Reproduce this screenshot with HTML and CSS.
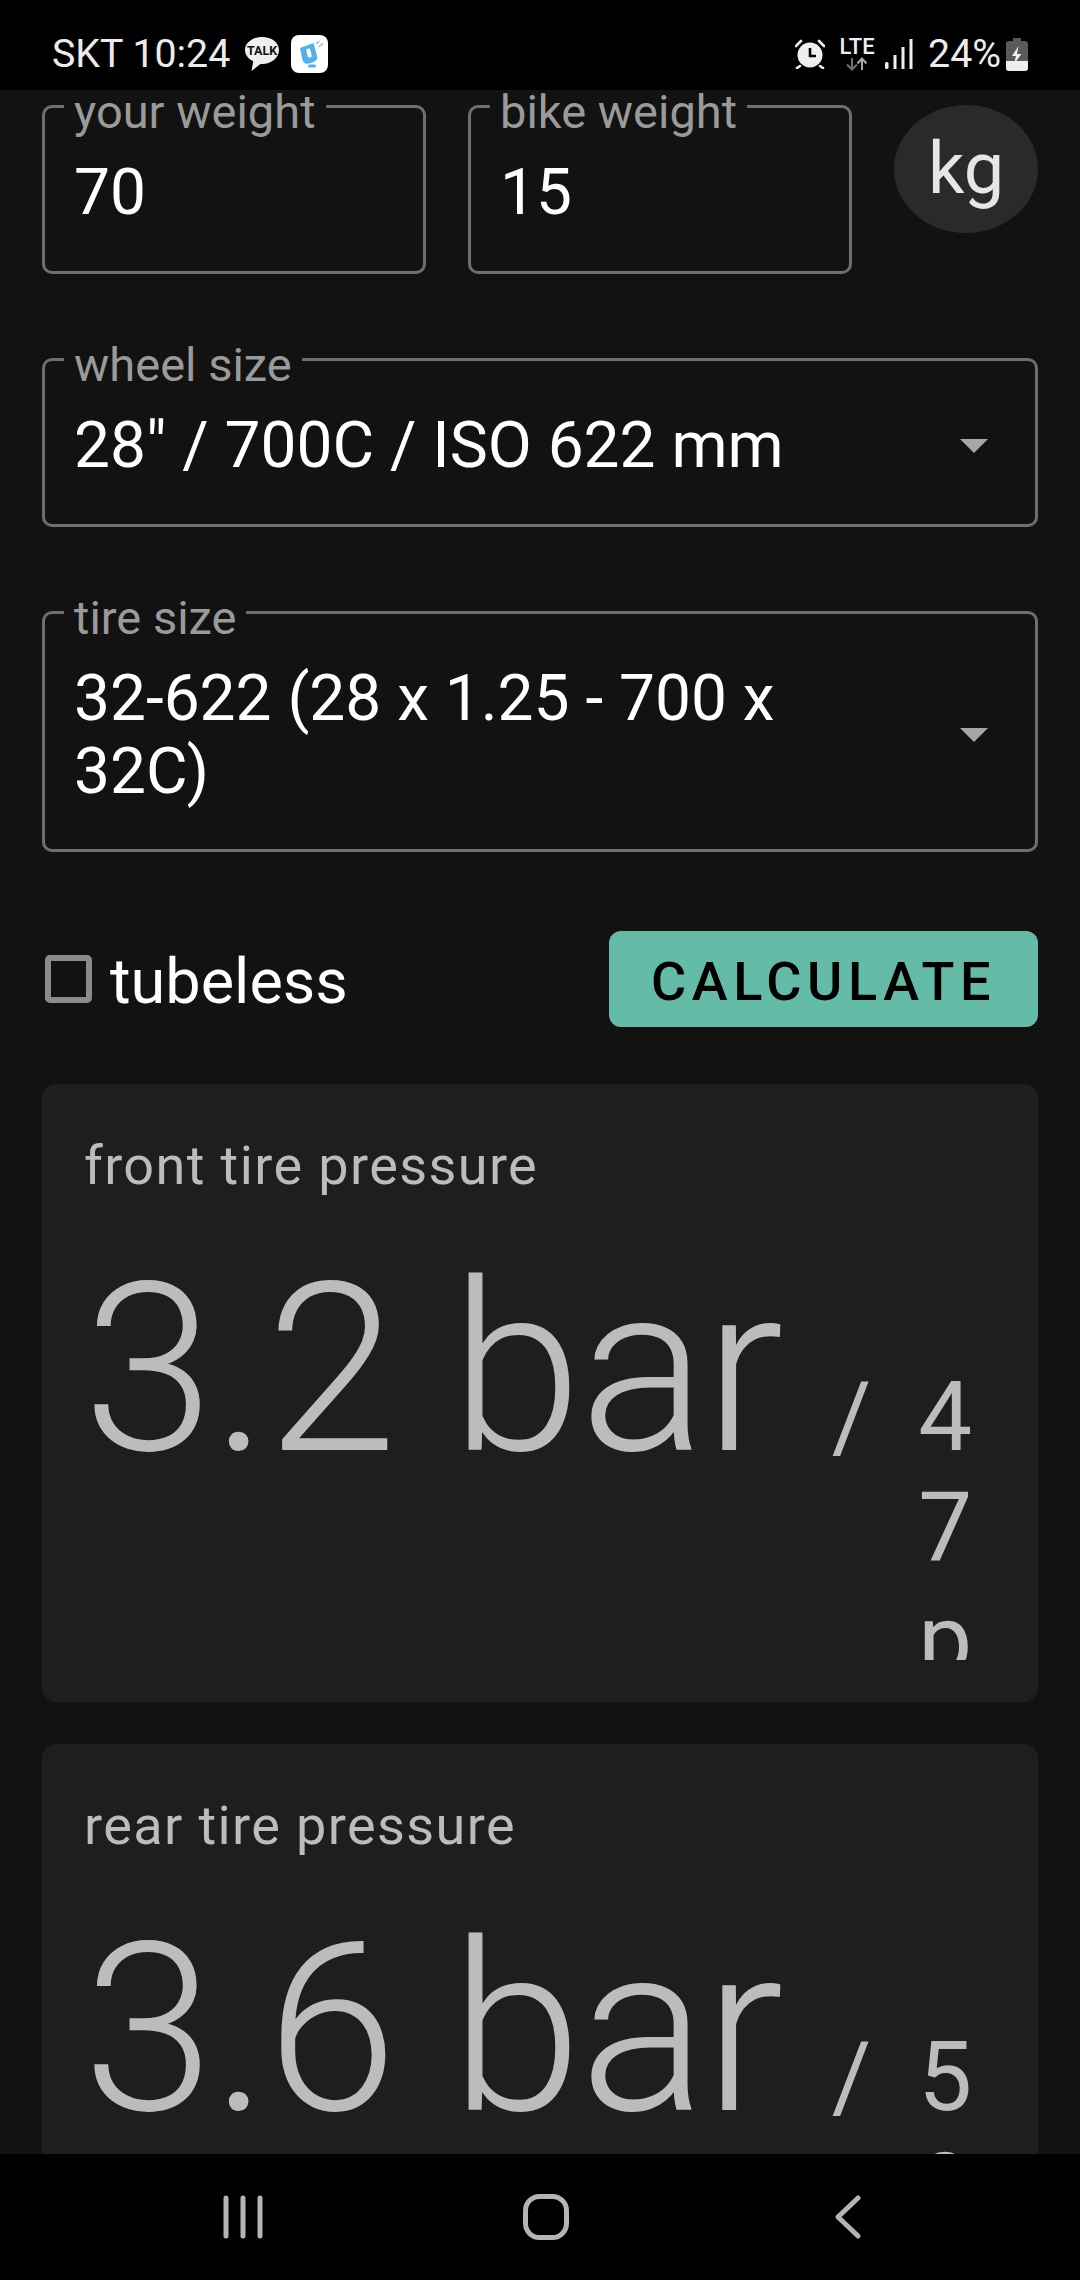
FILE: index.html
```html
<!DOCTYPE html>
<html lang="en">
<head>
<meta charset="utf-8">
<title>Tire pressure</title>
<link rel="stylesheet" href="styles.css">
</head>
<body>
<div class="screen">
  <header class="status">
    <div class="status-left">
      <span class="status-text">SKT 10:24</span>
      <svg class="ic-talk" viewBox="0 0 36 36"><path d="M18 1C8.600 1 1 6.800 1 14c0 4.800 3.300 8.900 8.200 11.200L7.500 35l9-7.100c.5 0 1 .1 1.500.1 9.400 0 17-6.300 17-14S27.400 1 18 1z" fill="#efefef"/><text x="18" y="19" class="talk-text" text-anchor="middle">TALK</text></svg>
      <svg class="ic-d" viewBox="0 0 37 38"><rect width="37" height="38" rx="8" fill="#fff"/><path d="M9 13l13.500-5 3.500 13c.8 3-.5 5-3.500 6l-5 1.500c-3 .8-5-.5-6-3.500z" fill="#4fb0ef"/><rect x="16" y="13.500" width="4" height="9" rx="1.500" transform="rotate(-15 18 18)" fill="#fff"/><rect x="17" y="29.500" width="8" height="3" rx="1.500" fill="#4fb0ef"/><path d="M25 9l3.500-3M27.500 12l4.500-3.500" stroke="#7fbfe8" stroke-width="1.300" fill="none"/></svg>
    </div>
    <div class="status-right">
      <svg class="ic-alarm" viewBox="0 0 30 30"><circle cx="15" cy="16" r="12.500" fill="#efefef"/><path d="M15 9v8h6" stroke="#000" stroke-width="2.600" fill="none"/><path d="M1 7l5-5M29 7l-5-5M5 27l-3 2M25 27l3 2" stroke="#efefef" stroke-width="2.600" stroke-linecap="round"/></svg>
      <div class="lte">
        <span class="lte-text">LTE</span>
        <svg class="ic-arrows" viewBox="0 0 24 14"><path d="M7 1v11M2 7.500L7 12.500 12 7.500" stroke="#6f6f6f" stroke-width="2" fill="none"/><path d="M17 13V2M12.500 6.500L17 1.500 21.500 6.500" stroke="#a8a8a8" stroke-width="2" fill="none"/></svg>
      </div>
      <svg class="ic-signal" viewBox="0 0 28 30"><rect x="0" y="23" width="3.500" height="7" rx="1.500" fill="#efefef"/><rect x="8.500" y="16" width="3" height="14" fill="#efefef"/><rect x="16.500" y="8" width="3" height="22" fill="#efefef"/><rect x="24.500" y="0" width="3" height="30" fill="#efefef"/></svg>
      <span class="status-text">24%</span>
      <svg class="ic-battery" viewBox="0 0 22 33"><path d="M7 0h8v3h4c1.700 0 3 1.300 3 3v24c0 1.700-1.300 3-3 3H3c-1.700 0-3-1.300-3-3V6c0-1.700 1.300-3 3-3h4z" fill="#5a5a5a"/><path d="M0 23h22v7c0 1.700-1.300 3-3 3H3c-1.700 0-3-1.300-3-3z" fill="#efefef"/><path d="M12.500 8L6 18h4l-2 8 7.500-10h-4.500z" fill="#efefef"/></svg>
    </div>
  </header>

  <main class="content">
    <section class="row-top">
      <div class="field">
        <span class="label">your weight</span>
        <div class="value">70</div>
      </div>
      <div class="field">
        <span class="label">bike weight</span>
        <div class="value">15</div>
      </div>
      <button class="unit">kg</button>
    </section>

    <div class="field select">
      <span class="label">wheel size</span>
      <div class="value">28" / 700C / ISO 622 mm</div>
      <span class="caret"></span>
    </div>

    <div class="field select tall">
      <span class="label">tire size</span>
      <div class="value">32-622 (28 x 1.25 - 700 x 32C)</div>
      <span class="caret"></span>
    </div>

    <section class="row-action">
      <label class="check"><span class="box"></span><span class="check-text">tubeless</span></label>
      <button class="calc">CALCULATE</button>
    </section>

    <article class="card">
      <h2 class="card-title">front tire pressure</h2>
      <div class="reading">
        <span class="big">3.2 bar</span>
        <span class="slash">/</span>
        <span class="alt">47 psi</span>
      </div>
    </article>

    <article class="card">
      <h2 class="card-title">rear tire pressure</h2>
      <div class="reading">
        <span class="big">3.6 bar</span>
        <span class="slash">/</span>
        <span class="alt">53 psi</span>
      </div>
    </article>
  </main>

  <nav class="nav">
    <svg class="nav-ic recents" viewBox="0 0 40 44"><path d="M3 3v38M20 3v38M37 3v38" stroke="#b4b4b4" stroke-width="5" stroke-linecap="round" fill="none"/></svg>
    <svg class="nav-ic home" viewBox="0 0 46 46"><rect x="2.500" y="2.500" width="41" height="41" rx="14" stroke="#b4b4b4" stroke-width="5" fill="none"/></svg>
    <svg class="nav-ic back" viewBox="0 0 26 44"><path d="M23 3L3 22l20 19" stroke="#b4b4b4" stroke-width="5" stroke-linecap="round" stroke-linejoin="round" fill="none"/></svg>
  </nav>
</div>
</body>
</html>
```
FILE: styles.css
```css
* { box-sizing: border-box; }
html, body { margin: 0; padding: 0; background: #121212; }
body { font-family: Roboto, "Noto Sans", sans-serif; color: #fff; }

.screen { width: 1080px; height: 2280px; display: flex; flex-direction: column; overflow: hidden; }

/* status bar */
.status { height: 90px; flex: none; background: #000; display: flex; justify-content: space-between; align-items: center; padding: 18px 52px 0 52px; }
.status-left, .status-right { display: flex; align-items: center; }
.status-text { font-size: 39.300px; line-height: 44px; color: #ececec; }
.ic-talk { width: 36px; height: 36px; margin-left: 14px; }
.talk-text { font: 700 12.500px Roboto, sans-serif; fill: #111; }
.ic-d { width: 37px; height: 38px; margin-left: 11px; }
.ic-alarm { width: 30px; height: 30px; }
.lte { width: 32px; margin-left: 16px; display: flex; flex-direction: column; align-items: center; }
.lte-text { font-size: 22px; line-height: 19px; font-weight: 500; color: #efefef; }
.ic-arrows { width: 24px; height: 14px; margin-top: 1px; }
.ic-signal { width: 28px; height: 30px; margin-left: 12px; }
.ic-signal + .status-text { margin-left: 15px; }
.ic-battery { width: 22px; height: 33px; margin-left: 5px; }

/* main */
.content { flex: 1; min-height: 0; overflow: hidden; padding: 15px 42px 0; display: flex; flex-direction: column; }
.content > * { flex: none; }

.row-top { display: flex; gap: 42px; align-items: flex-start; }
.row-top .field { flex: 1; }

.field { position: relative; height: 169px; border: 3px solid #6e6e6e; border-radius: 10px; padding: 48px 29px 0; }
.label { position: absolute; top: -20px; left: 19px; padding: 0 10px; background: #121212; font-size: 47px; line-height: 48px; color: #9a9a9a; white-space: nowrap; }
.value { font-size: 64px; line-height: 73px; color: #fff; }

.unit { width: 144px; height: 128px; border: 0; border-radius: 72px / 64px; background: #2a2a2a; color: #e6e6e6; font: 400 72px/128px Roboto, sans-serif; padding: 0 0 8px; flex: none; }

.select { margin-top: 84px; padding-right: 110px; }
.tall { height: 241px; }
.caret { position: absolute; right: 47px; top: 78px; width: 0; height: 0; border-left: 14px solid transparent; border-right: 14px solid transparent; border-top: 14px solid #a6a6a6; }
.tall .caret { top: 114px; }

.row-action { margin-top: 79px; height: 96px; display: flex; justify-content: space-between; align-items: center; }
.check { display: flex; align-items: center; }
.box { width: 47px; height: 48px; margin-left: 3px; border: 6px solid #8b8b8b; border-radius: 5px; }
.check-text { margin-left: 18px; padding-top: 5px; font-size: 63px; line-height: 70px; color: #fff; }
.calc { width: 429px; height: 96px; border: 0; border-radius: 12px; background: #64bca8; color: #000; font: 500 54px/90px Roboto, sans-serif; letter-spacing: 5.600px; padding: 6px 0 0; }

/* cards */
.card { height: 618px; margin-top: 57px; background: #1e1e1e; border-radius: 14px; padding: 42px; display: flex; flex-direction: column; color: #bcbcbc; }
.card + .card { margin-top: 42px; }
.card-title { margin: 0; padding-top: 12px; flex: none; font-size: 54px; line-height: 56px; font-weight: 400; letter-spacing: 1.400px; }
.reading { flex: 1; min-height: 0; overflow: hidden; display: flex; align-items: baseline; margin-top: 36px; }
.big { flex: none; font-size: 236px; line-height: 280px; font-weight: 300; letter-spacing: -2px; margin-left: -1px; }
.slash { flex: none; margin-left: 50px; font-size: 96px; line-height: 111px; font-weight: 400; }
.alt { flex: 1; min-width: 0; margin-left: 47px; font-size: 96px; line-height: 111px; font-weight: 400; word-break: break-all; }

/* nav */
.nav { height: 126px; flex: none; background: #000; position: relative; display: flex; align-items: flex-start; padding: 40px 0 0 223px; }
.nav-ic { display: block; flex: none; }
.recents { width: 40px; height: 44px; margin-top: 1px; }
.home { width: 46px; height: 46px; margin-left: 260px; }
.back { width: 26px; height: 44px; margin-left: 266px; margin-top: 1px; }
```
